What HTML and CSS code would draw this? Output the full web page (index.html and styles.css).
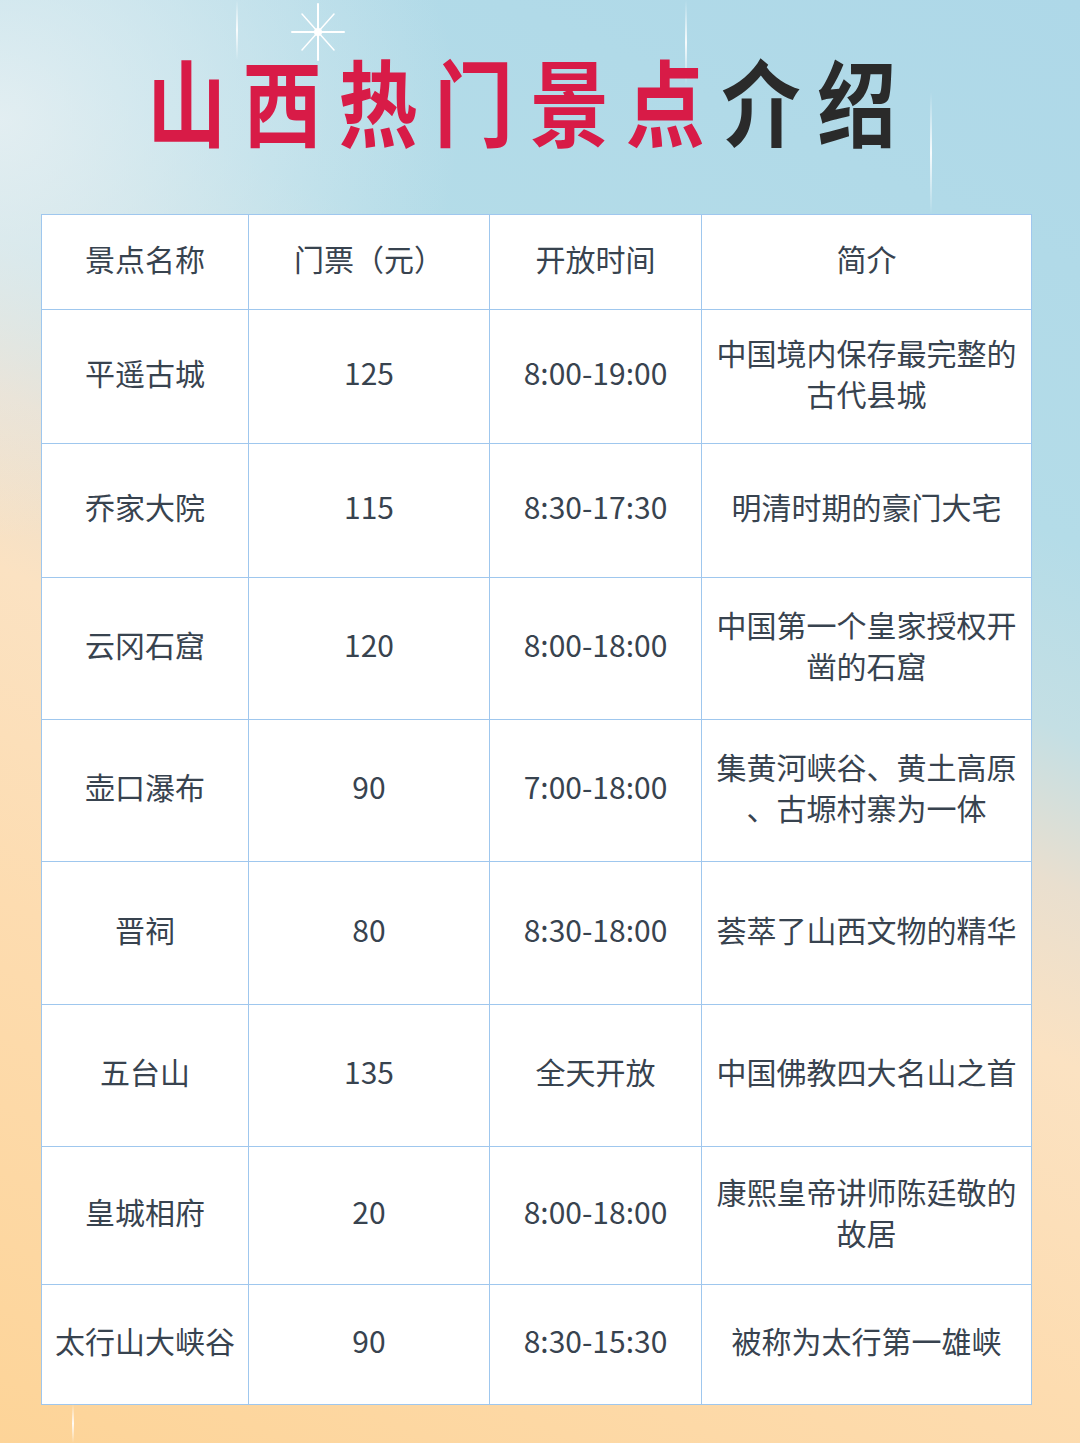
FILE: index.html
```html
<!DOCTYPE html>
<html lang="zh-CN">
<head>
<meta charset="utf-8">
<title>山西热门景点介绍</title>
<link rel="stylesheet" href="styles.css">
</head>
<body>
<div class="page">
  <div class="spark spark-a"></div>
  <div class="spark spark-b"></div>
  <div class="spark spark-c"></div>
  <div class="spark spark-d"></div>
  <svg class="star" width="60" height="60" viewBox="0 0 60 60" aria-hidden="true">
    <g stroke="#ffffff" stroke-linecap="round">
      <line x1="30" y1="2" x2="30" y2="58" stroke-width="2"/>
      <line x1="4" y1="30" x2="56" y2="30" stroke-width="2"/>
      <line x1="14" y1="12" x2="46" y2="48" stroke-width="1.5"/>
      <line x1="46" y1="12" x2="14" y2="48" stroke-width="1.5"/>
    </g>
    <circle cx="30" cy="30" r="4" fill="#ffffff"/>
  </svg>

  <header class="title-wrap">
    <h1 class="title"><span class="red">山西热门景点</span><span class="dark">介绍</span></h1>
  </header>

  <table class="sights">
    <colgroup>
      <col class="c1"><col class="c2"><col class="c3"><col class="c4">
    </colgroup>
    <thead>
      <tr class="r-head">
        <th>景点名称</th><th>门票（元）</th><th>开放时间</th><th>简介</th>
      </tr>
    </thead>
    <tbody>
      <tr class="r1"><td>平遥古城</td><td>125</td><td>8:00-19:00</td><td>中国境内保存最完整的<br>古代县城</td></tr>
      <tr class="r2"><td>乔家大院</td><td>115</td><td>8:30-17:30</td><td>明清时期的豪门大宅</td></tr>
      <tr class="r3"><td>云冈石窟</td><td>120</td><td>8:00-18:00</td><td>中国第一个皇家授权开<br>凿的石窟</td></tr>
      <tr class="r4"><td>壶口瀑布</td><td>90</td><td>7:00-18:00</td><td>集黄河峡谷、黄土高原<br>、古塬村寨为一体</td></tr>
      <tr class="r5"><td>晋祠</td><td>80</td><td>8:30-18:00</td><td>荟萃了山西文物的精华</td></tr>
      <tr class="r6"><td>五台山</td><td>135</td><td>全天开放</td><td>中国佛教四大名山之首</td></tr>
      <tr class="r7"><td>皇城相府</td><td>20</td><td>8:00-18:00</td><td>康熙皇帝讲师陈廷敬的<br>故居</td></tr>
      <tr class="r8"><td>太行山大峡谷</td><td>90</td><td>8:30-15:30</td><td>被称为太行第一雄峡</td></tr>
    </tbody>
  </table>
</div>
</body>
</html>
```

FILE: styles.css
```css
html, body {
  margin: 0;
  padding: 0;
}

body {
  width: 1080px;
  height: 1443px;
  overflow: hidden;
  font-family: "Noto Sans CJK SC", "Noto Sans", sans-serif;
}

.page {
  position: relative;
  width: 1080px;
  height: 1443px;
  box-sizing: border-box;
  padding: 0 49px 0 41px;
  background:
    radial-gradient(ellipse 460px 420px at 0px 120px, rgba(236, 242, 244, 0.8), rgba(236, 242, 244, 0) 100%),
    linear-gradient(205deg, #aed8e8 0%, #b4dce8 28%, #c4dfe4 38%, #e9dfcf 46%, #fbe2c2 55%, #fddcb0 72%, #fdd498 100%);
  overflow: hidden;
}

.spark {
  position: absolute;
  width: 2px;
  background: linear-gradient(180deg, rgba(255,255,255,0), rgba(255,255,255,0.9) 50%, rgba(255,255,255,0));
}
.spark-a { left: 236px; top: 0; height: 60px; }
.spark-b { left: 685px; top: 0; height: 85px; }
.spark-c { left: 930px; top: 92px; height: 122px; }
.spark-d { left: 72px; top: 1404px; height: 39px; }

.star {
  position: absolute;
  left: 288px;
  top: 2px;
}

.title-wrap {
  height: 214px;
  display: flex;
  align-items: flex-start;
  justify-content: center;
  box-sizing: border-box;
  padding-top: 44px;
  padding-right: 12px;
}

.title {
  margin: 0;
  font-size: 94px;
  line-height: 110px;
  font-weight: 700;
  letter-spacing: 20px;
  transform: scaleX(0.84);
  white-space: nowrap;
}

.red { color: #d81b47; }
.dark { color: #2a2a2a; }

.sights {
  width: 990px;
  border-collapse: collapse;
  table-layout: fixed;
  background: #ffffff;
  color: #38434f;
  font-size: 30px;
  line-height: 41px;
}

.c1 { width: 207px; }
.c2 { width: 241px; }
.c3 { width: 212px; }
.c4 { width: 330px; }

.sights th,
.sights td {
  border: 1.5px solid #9fc7ee;
  text-align: center;
  vertical-align: middle;
  padding: 0 8px 8px;
  font-weight: 400;
  white-space: nowrap;
}

.r-head { height: 95px; }
.r1 { height: 134px; }
.r2 { height: 134px; }
.r3 { height: 142px; }
.r4 { height: 142px; }
.r5 { height: 143px; }
.r6 { height: 142px; }
.r7 { height: 138px; }
.r8 { height: 120px; }
```
